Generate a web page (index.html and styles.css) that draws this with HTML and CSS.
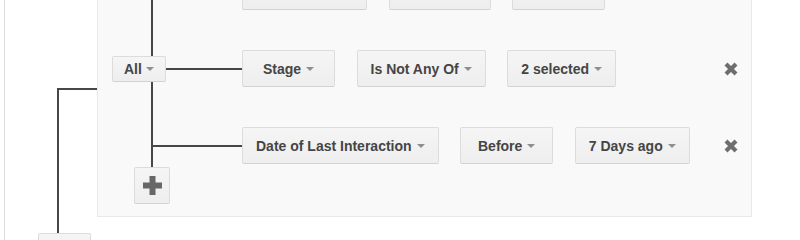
FILE: index.html
```html
<!DOCTYPE html>
<html lang="en">
<head>
<meta charset="utf-8">
<title>Filter builder</title>
<link rel="stylesheet" href="styles.css">
</head>
<body>
<div class="outer">
  <div class="outer-grid">
    <div class="elbow"></div>
    <div class="panel">
      <div class="group">
        <div class="spine"></div>

        <div class="branch r1"></div>
        <div class="rule r1">
          <div class="conds">
            <button class="btn dd">Group Name<span class="caret"></span></button>
            <button class="btn dd">Is Any Of<span class="caret"></span></button>
            <button class="btn dd">Sales<span class="caret"></span></button>
          </div>
          <button class="del" aria-label="Remove"><svg width="16" height="16" viewBox="0 0 16 16"><path d="M3 3L13 13M13 3L3 13" stroke="#6e6e6e" stroke-width="4.2"/></svg></button>
        </div>

        <div class="branch r2"></div>
        <div class="rule r2">
          <div class="conds">
            <button class="btn dd">Stage<span class="caret"></span></button>
            <button class="btn dd">Is Not Any Of<span class="caret"></span></button>
            <button class="btn dd">2 selected<span class="caret"></span></button>
          </div>
          <button class="del" aria-label="Remove"><svg width="16" height="16" viewBox="0 0 16 16"><path d="M3 3L13 13M13 3L3 13" stroke="#6e6e6e" stroke-width="4.2"/></svg></button>
        </div>

        <div class="branch r3"></div>
        <div class="rule r3">
          <div class="conds">
            <button class="btn dd">Date of Last Interaction<span class="caret"></span></button>
            <button class="btn dd">Before<span class="caret"></span></button>
            <button class="btn dd">7 Days ago<span class="caret"></span></button>
          </div>
          <button class="del" aria-label="Remove"><svg width="16" height="16" viewBox="0 0 16 16"><path d="M3 3L13 13M13 3L3 13" stroke="#6e6e6e" stroke-width="4.2"/></svg></button>
        </div>

        <button class="btn mode r2">All<span class="caret"></span></button>
      </div>
      <button class="btn add" aria-label="Add condition"><svg width="19" height="19" viewBox="0 0 19 19"><path d="M6.5 0h6v6.5h6.5v6h-6.5v6.5h-6v-6.5h-6.5v-6h6.5z" fill="#676767"/></svg></button>
    </div>
    <div class="foot">
      <button class="btn mode">All<span class="caret"></span></button>
    </div>
  </div>
</div>
</body>
</html>
```

FILE: styles.css
```css
* { box-sizing: border-box; }

html, body {
  margin: 0;
  height: 240px;
  overflow: hidden;
  background: #fff;
}

body {
  font-family: "Liberation Sans", Arial, sans-serif;
}

.outer {
  margin: -40px 0 0 4px;
  border-left: 1px solid #dcdcdc;
  padding-left: 27px;
  min-height: 400px;
}

.outer-grid {
  display: grid;
  grid-template-columns: 65px 655px;
}

.elbow {
  display: flex;
  flex-direction: column;
}
.elbow::before {
  content: "";
  flex: 1;
}
.elbow::after {
  content: "";
  flex: 1;
  margin-left: 25px;
  border-top: 2px solid #474747;
  border-left: 2px solid #474747;
}

.foot {
  grid-column: 1;
  display: flex;
  flex-direction: column;
  align-items: flex-start;
}
.foot::before {
  content: "";
  height: 16px;
  margin-left: 25px;
  border-left: 2px solid #474747;
}

.panel {
  background: #f9f9f9;
  border: 1px solid #e9e9e9;
  padding: 12px 12px 12px 14px;
}

.group {
  display: grid;
  grid-template-columns: 130px 1fr;
  grid-template-rows: repeat(3, 37px);
  row-gap: 40px;
}

.spine {
  grid-area: 1 / 1 / 4 / 2;
  margin: 17.5px 0 -3px 39px;
  border-left: 2px solid #474747;
}

.branch {
  grid-column: 1;
  display: flex;
  align-items: center;
}
.branch::after {
  content: "";
  flex: 1;
  height: 2px;
  margin-left: 39px;
  background: #474747;
}

.r1 { grid-row: 1; }
.r2 { grid-row: 2; }
.r3 { grid-row: 3; }

.rule {
  grid-column: 2;
  display: flex;
  align-items: center;
}

.conds {
  display: flex;
  gap: 21.6px;
}

.btn {
  font: bold 14px "Liberation Sans", Arial, sans-serif;
  color: #454545;
  background: linear-gradient(#f5f5f5, #eeeeee);
  border: 1px solid #dcdcdc;
  border-bottom-color: #d2d2d2;
  border-radius: 2px;
  display: inline-flex;
  align-items: center;
  justify-content: center;
  padding: 0;
  margin: 0;
}

.dd {
  height: 37px;
  min-width: 93px;
  padding: 0 13px;
  gap: 5px;
}

.caret {
  width: 0;
  height: 0;
  border-left: 4.5px solid transparent;
  border-right: 4.5px solid transparent;
  border-top: 4.5px solid #8e8e8e;
}

.mode {
  grid-column: 1;
  align-self: center;
  justify-self: start;
  z-index: 1;
  height: 26px;
  padding: 0 11px;
  gap: 4px;
}

.add {
  width: 36px;
  height: 37px;
  margin: 3px 0 0 22px;
}

.del {
  margin-left: auto;
  width: 16px;
  height: 16px;
  padding: 0;
  border: 0;
  background: none;
  line-height: 0;
}
```
